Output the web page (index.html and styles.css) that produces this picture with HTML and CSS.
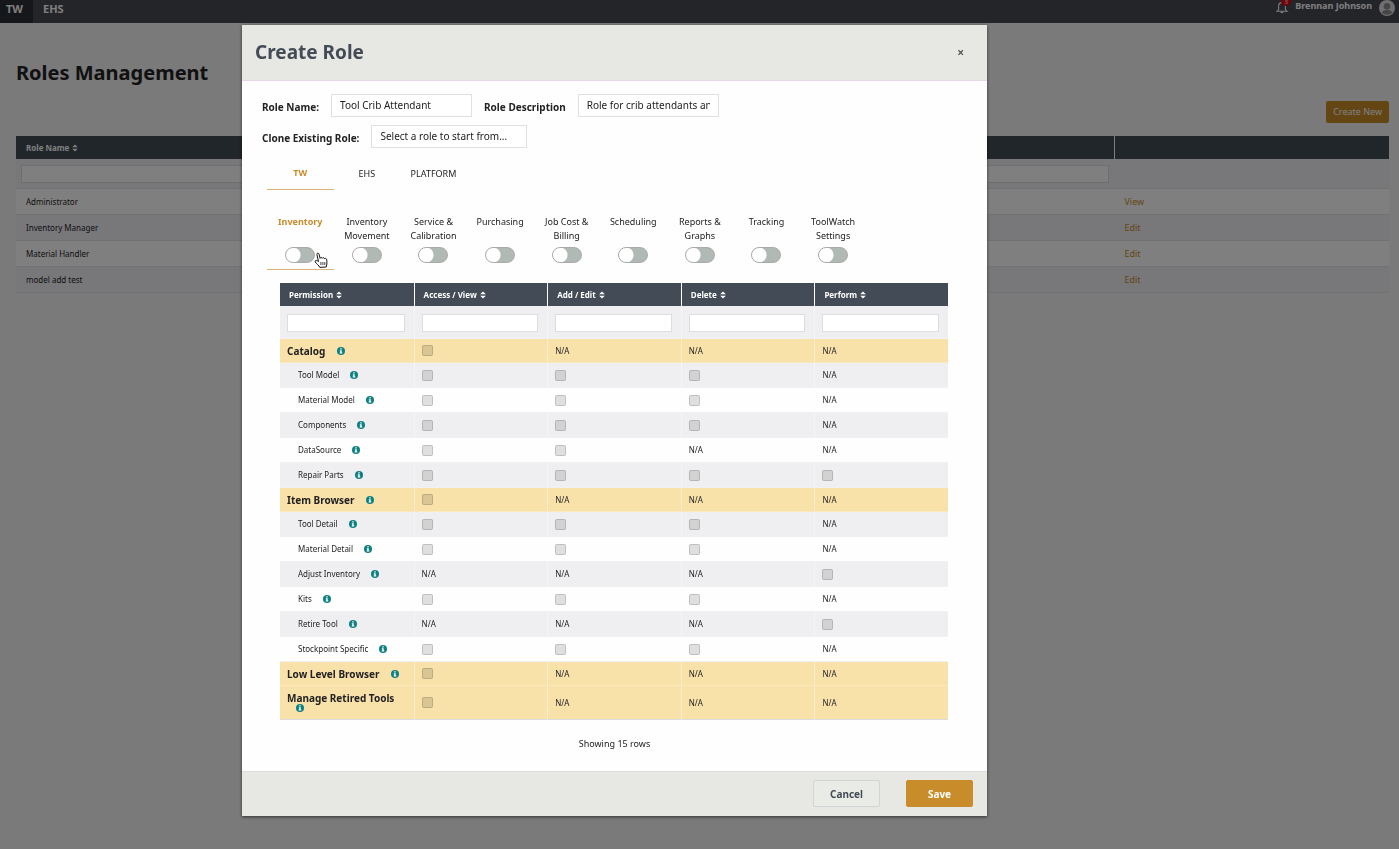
FILE: index.html
```html
<!DOCTYPE html>
<html lang="en">
<head>
    <meta charset="UTF-8">
    <meta name="viewport" content="width=device-width, initial-scale=1.0">
    <title>Roles Management</title>
    <link rel="stylesheet" href="styles.css">
</head>
<body>

    <svg class="sprite" aria-hidden="true">
        <symbol id="sort" viewBox="0 0 6 8">
            <path d="M3 0.4 L5.8 3.3 H0.2 Z M0.2 4.7 H5.8 L3 7.6 Z" fill="currentColor"/>
        </symbol>
        <symbol id="info" viewBox="0 0 16 16">
            <circle cx="8" cy="8" r="8" fill="#0f8080"/>
            <path d="M6.6 2.6h2.8v2.5H6.6z M5.6 6.4h3.8v4.6h1.2v2H5.4v-2h1.2V8.4h-1z" fill="#fff"/>
        </symbol>
    </svg>

    <header class="topbar">
        <nav class="products">
            <a href="#" class="current">TW</a>
            <a href="#">EHS</a>
        </nav>
        <div class="account">
            <button class="bell" aria-label="Notifications">
                <svg viewBox="0 0 12 14" width="12" height="14">
                    <path d="M6 1.5v1 M2.6 9.6V6.2a3.4 3.6 0 0 1 6.8 0v3.4l1.6 1.6H1z" fill="none" stroke="#fff" stroke-width="1.1"/>
                    <path d="M4.6 12.4h2.8" stroke="#fff" stroke-width="1.3"/>
                </svg>
                <span class="badge">3</span>
            </button>
            <span class="user">Brennan Johnson</span>
            <svg class="avatar" viewBox="0 0 16 16" width="16" height="16">
                <circle cx="8" cy="8" r="8" fill="#e0e0e0"/>
                <circle cx="8" cy="6.2" r="3.3" fill="#8d8d8d"/>
                <path d="M2.8 12.6c1-2 2.8-2.8 5.2-2.8s4.2.8 5.2 2.8c-1.400 1.500-3.200 2.200-5.200 2.200s-3.800-.7-5.200-2.200z" fill="#8d8d8d"/>
            </svg>
        </div>
    </header>

    <main class="page">
        <h1>Roles Management</h1>
        <div class="page-actions">
            <button class="create">Create New</button>
        </div>
        <table class="roles">
            <thead>
                <tr>
                    <th>Role Name <svg class="sort"><use href="#sort"/></svg></th>
                    <th>Description <svg class="sort"><use href="#sort"/></svg></th>
                    <th></th>
                </tr>
            </thead>
            <tbody>
                <tr class="filters">
                    <td><input type="text" aria-label="Filter role name"></td>
                    <td><input type="text" aria-label="Filter description"></td>
                    <td></td>
                </tr>
                <tr><td>Administrator</td><td></td><td><a href="#">View</a></td></tr>
                <tr><td>Inventory Manager</td><td></td><td><a href="#">Edit</a></td></tr>
                <tr><td>Material Handler</td><td></td><td><a href="#">Edit</a></td></tr>
                <tr><td>model add test</td><td></td><td><a href="#">Edit</a></td></tr>
            </tbody>
        </table>
    </main>

    <div class="overlay">
        <section class="modal" role="dialog" aria-labelledby="modal-title">
            <div class="modal-header">
                <h2 id="modal-title">Create Role</h2>
                <button class="close" aria-label="Close">×</button>
            </div>

            <div class="modal-body">
                <div class="form-row">
                    <label for="role-name">Role Name:</label>
                    <input type="text" id="role-name" value="Tool Crib Attendant">
                    <label for="role-desc">Role Description</label>
                    <input type="text" id="role-desc" value="Role for crib attendants and helpers">
                </div>
                <div class="form-row">
                    <label for="clone">Clone Existing Role:</label>
                    <select id="clone">
                        <option>Select a role to start from...</option>
                    </select>
                </div>

                <div class="tabs">
                    <button class="active">TW</button>
                    <button>EHS</button>
                    <button>PLATFORM</button>
                </div>

                <div class="modules">
                    <label class="module active"><span>Inventory</span><input type="checkbox" class="toggle">
                        <svg class="pointer" viewBox="0 0 14 16" width="14" height="16">
                            <path d="M4.500 9.500 L2.900 2.600 C2.600 1 4.600 .5 5 2.100 L6.100 6.300 C6.300 5.200 8 5.200 8.300 6.300 C8.700 5.300 10.200 5.500 10.500 6.700 C11.200 6 12.600 6.400 12.700 7.600 C12.900 9.500 13.200 12 12.200 15 L5.800 15.400 C5 13.500 2.500 11.800 1.300 10 C.6 8.700 2.200 7.800 3.100 8.700 Z" fill="#fff" stroke="#111" stroke-width="1"/>
                            <path d="M6.900 10v3.200 M8.900 10v3.100 M10.800 10v3" stroke="#111" stroke-width=".8"/>
                        </svg>
                    </label>
                    <label class="module"><span>Inventory Movement</span><input type="checkbox" class="toggle"></label>
                    <label class="module"><span>Service &amp; Calibration</span><input type="checkbox" class="toggle"></label>
                    <label class="module"><span>Purchasing</span><input type="checkbox" class="toggle"></label>
                    <label class="module"><span>Job Cost &amp; Billing</span><input type="checkbox" class="toggle"></label>
                    <label class="module"><span>Scheduling</span><input type="checkbox" class="toggle"></label>
                    <label class="module"><span>Reports &amp; Graphs</span><input type="checkbox" class="toggle"></label>
                    <label class="module"><span>Tracking</span><input type="checkbox" class="toggle"></label>
                    <label class="module"><span>ToolWatch Settings</span><input type="checkbox" class="toggle"></label>
                </div>

                <div class="table-wrap">
                    <table class="permissions">
                        <thead>
                            <tr>
                                <th>Permission <svg class="sort"><use href="#sort"/></svg></th>
                                <th>Access / View <svg class="sort"><use href="#sort"/></svg></th>
                                <th>Add / Edit <svg class="sort"><use href="#sort"/></svg></th>
                                <th>Delete <svg class="sort"><use href="#sort"/></svg></th>
                                <th>Perform <svg class="sort"><use href="#sort"/></svg></th>
                            </tr>
                        </thead>
                        <tbody id="permissions">
                            <tr class="filters">
                                <td><input type="text" aria-label="Filter permission"></td>
                                <td><input type="text" aria-label="Filter access"></td>
                                <td><input type="text" aria-label="Filter add"></td>
                                <td><input type="text" aria-label="Filter delete"></td>
                                <td><input type="text" aria-label="Filter perform"></td>
                            </tr>
                        </tbody>
                    </table>
                </div>
                <p class="count">Showing 15 rows</p>
            </div>

            <div class="modal-footer">
                <button class="cancel">Cancel</button>
                <button class="save">Save</button>
            </div>
        </section>
    </div>

    <script>
        // x = checkbox, - = not available; order is access, add, delete, perform
        const columns = ["access", "add", "delete", "perform"];
        const rows = [
            ["Catalog", "x---", true],
            ["Tool Model", "xxx-"],
            ["Material Model", "xxx-"],
            ["Components", "xxx-"],
            ["DataSource", "xx--"],
            ["Repair Parts", "xxxx"],
            ["Item Browser", "x---", true],
            ["Tool Detail", "xxx-"],
            ["Material Detail", "xxx-"],
            ["Adjust Inventory", "---x"],
            ["Kits", "xxx-"],
            ["Retire Tool", "---x"],
            ["Stockpoint Specific", "xxx-"],
            ["Low Level Browser", "x---", true],
            ["Manage Retired Tools", "x---", true]
        ];

        let body = document.getElementById("permissions");
        rows.forEach(([name, cells, group]) => {
            let tr = document.createElement("tr");
            if (group) tr.className = "group";
            let html = `<td>${name} <svg class="info"><use href="#info"/></svg></td>`;
            columns.forEach((column, i) => {
                html += cells[i] === "x"
                    ? `<td><input type="checkbox" disabled aria-label="${name} ${column}"></td>`
                    : "<td>N/A</td>";
            });
            tr.innerHTML = html;
            body.appendChild(tr);
        });
    </script>

</body>
</html>
```
FILE: styles.css
```css
* {
    box-sizing: border-box;
}
body {
    font-family: "Noto Sans", sans-serif;
    font-size: 8px;
    margin: 0;
    background-color: #f5f5f5;
    color: #222;
    overflow: hidden;
}
button, input, select {
    font-family: inherit;
    margin: 0;
}
button {
    cursor: pointer;
}
.sprite {
    display: none;
}
.topbar {
    display: flex;
    justify-content: space-between;
    height: 23px;
    background-color: #464a52;
    color: #fff;
}
.products {
    display: flex;
}
.products a {
    padding: 0 10px;
    color: #fff;
    font-size: 11px;
    font-weight: bold;
    line-height: 18px;
    text-decoration: none;
}
.products a.current {
    padding-left: 6px;
    background-color: #2b2e36;
}
.account {
    display: flex;
    align-items: flex-start;
    gap: 7px;
    padding-right: 4px;
}
.bell {
    position: relative;
    padding: 0;
    border: none;
    background: none;
    line-height: 0;
}
.badge {
    position: absolute;
    top: -4px;
    left: 5px;
    width: 10px;
    height: 10px;
    border-radius: 50%;
    background-color: #e00010;
    color: #fff;
    font-size: 6px;
    line-height: 13px;
}
.user {
    font-size: 9px;
    font-weight: bold;
    line-height: 12px;
}
.page {
    padding: 0 10px 0 16px;
}
.page h1 {
    margin: 0;
    padding-top: 36px;
    font-size: 20px;
    line-height: 28px;
}
.page-actions {
    display: flex;
    justify-content: flex-end;
    padding: 14px 0 13px;
}
.create {
    padding: 0 7px;
    border: none;
    border-radius: 2px;
    background-color: #c98c2b;
    color: #fff;
    font-size: 9px;
    line-height: 22px;
}
table {
    width: 100%;
    table-layout: fixed;
    border-collapse: separate;
    border-spacing: 0;
}
th {
    height: 23px;
    padding: 0 9px;
    background-color: #434c56;
    color: #fff;
    font-size: 8px;
    text-align: left;
}
th + th {
    border-left: 1px solid #fff;
}
.sort {
    width: 6px;
    height: 8px;
    margin-left: 1px;
    vertical-align: -1px;
}
.roles th {
    padding: 0 10px;
    background-color: #404c54;
}
.roles th:last-child {
    width: 20%;
}
.roles th:nth-child(2) {
    border-left: none;
}
.roles td {
    height: 26px;
    padding: 0 10px;
    border-bottom: 1px solid #e4e4e6;
    background-color: #fff;
}
.roles tr:nth-child(odd) td {
    background-color: #f1f0f4;
}
.roles .filters td {
    height: 30px;
    padding: 0 5px;
}
.filters input {
    display: block;
    width: 100%;
    height: 18px;
    border: 1px solid #dddddf;
    background-color: #fff;
}
.roles a {
    color: #c98c2b;
    font-size: 9px;
    text-decoration: none;
}
.overlay {
    position: fixed;
    inset: 0;
    padding: 25px 412px 0 242px;
    background-color: rgba(0, 0, 0, 0.5);
}
.modal {
    background-color: #fefefe;
    box-shadow: 0 1px 3px rgba(0, 0, 0, 0.6);
}
.modal-header {
    display: flex;
    justify-content: space-between;
    align-items: center;
    height: 56px;
    padding: 0 20px 1px 13px;
    border-bottom: 1px solid #e6d8e6;
    background-color: #e7e8e3;
}
.modal-header h2 {
    margin: 0;
    color: #434c56;
    font-size: 19px;
}
.close {
    padding: 0 3px;
    border: none;
    background: none;
    color: #555;
    font-size: 12px;
    font-weight: bold;
}
.modal-body {
    padding: 13px 0 20px;
}
.form-row {
    display: flex;
    align-items: center;
    gap: 12px;
    margin: 0 20px 8px;
}
.form-row label {
    padding-top: 2px;
    font-size: 10px;
    font-weight: bold;
}
.form-row input, .form-row select {
    width: 141px;
    height: 23px;
    padding: 0 8px 1px;
    border: 1px solid #dfdfe4;
    background-color: #fff;
    color: #222;
    font-size: 10px;
}
.form-row select {
    appearance: none;
    width: 156px;
}
.tabs, .modules {
    display: grid;
    grid-template-columns: repeat(10, 1fr);
    margin: 0 54px 0 25px;
}
.tabs button {
    height: 34px;
    padding: 0;
    border: none;
    background: none;
    color: #222;
    font-size: 9px;
}
.tabs .active {
    border-bottom: 1px solid #dcb47a;
    color: #c98c2b;
    font-weight: bold;
}
.modules {
    margin-top: 25px;
}
.module {
    position: relative;
    display: flex;
    flex-direction: column;
    align-items: center;
    height: 55px;
    font-size: 9px;
    line-height: 14px;
    text-align: center;
}
.module span {
    height: 32px;
    padding: 0 6px;
}
.module.active {
    border-bottom: 1px solid #dcb47a;
    color: #c98c2b;
    font-weight: bold;
}
.toggle {
    appearance: none;
    width: 30px;
    height: 16px;
    border: 1px solid #a9aaa9;
    border-radius: 8px;
    background: radial-gradient(circle at 7px 7px, #fff 7px, #b1b9b5 8px);
}
.pointer {
    position: absolute;
    left: 47px;
    top: 37px;
}
.table-wrap {
    margin: 13px 39px 0 38px;
}
.permissions td {
    height: 25px;
    padding: 0 7px;
    line-height: 10px;
    border-bottom: 1px solid #f1f1f3;
    border-left: 1px solid rgba(255, 255, 255, 0.4);
}
.permissions td:first-child {
    padding-left: 18px;
    border-left: none;
}
.permissions tr:nth-child(odd) td {
    background-color: #efeff1;
}
.permissions .filters td {
    height: 33px;
    padding: 2px 9px 0 7px;
}
.permissions tr.group:nth-child(n) td {
    height: 24px;
    border-bottom-color: #fbe9bd;
    background-color: #f9e1aa;
}
.permissions .group td:first-child {
    padding-left: 7px;
    font-size: 10px;
    font-weight: bold;
}
.permissions tr.group:last-child td {
    height: 34px;
    border-bottom-color: #dddde0;
}
.info {
    width: 8px;
    height: 8px;
    margin-left: 9px;
    vertical-align: -1px;
}
.group .info {
    vertical-align: 0;
}
.permissions input[type="checkbox"] {
    appearance: none;
    display: block;
    width: 11px;
    height: 11px;
    border: 1px solid rgba(0, 0, 0, 0.14);
    border-radius: 2px;
    background-color: rgba(0, 0, 0, 0.12);
}
.count {
    margin: 17px 0 0;
    font-size: 9px;
    line-height: 14px;
    text-align: center;
}
.modal-footer {
    display: flex;
    justify-content: flex-end;
    gap: 26px;
    padding: 8px 14px 9px 0;
    border-top: 1px solid #dcdce0;
    background-color: #e7e8e3;
}
.modal-footer button {
    width: 67px;
    height: 27px;
    border: 1px solid #d2d4d8;
    border-radius: 2px;
    background-color: #e9ebe7;
    color: #434c56;
    font-size: 10px;
    font-weight: bold;
}
.modal-footer .save {
    border-color: #c98c2b;
    background-color: #c98c2b;
    color: #fff;
}
```
